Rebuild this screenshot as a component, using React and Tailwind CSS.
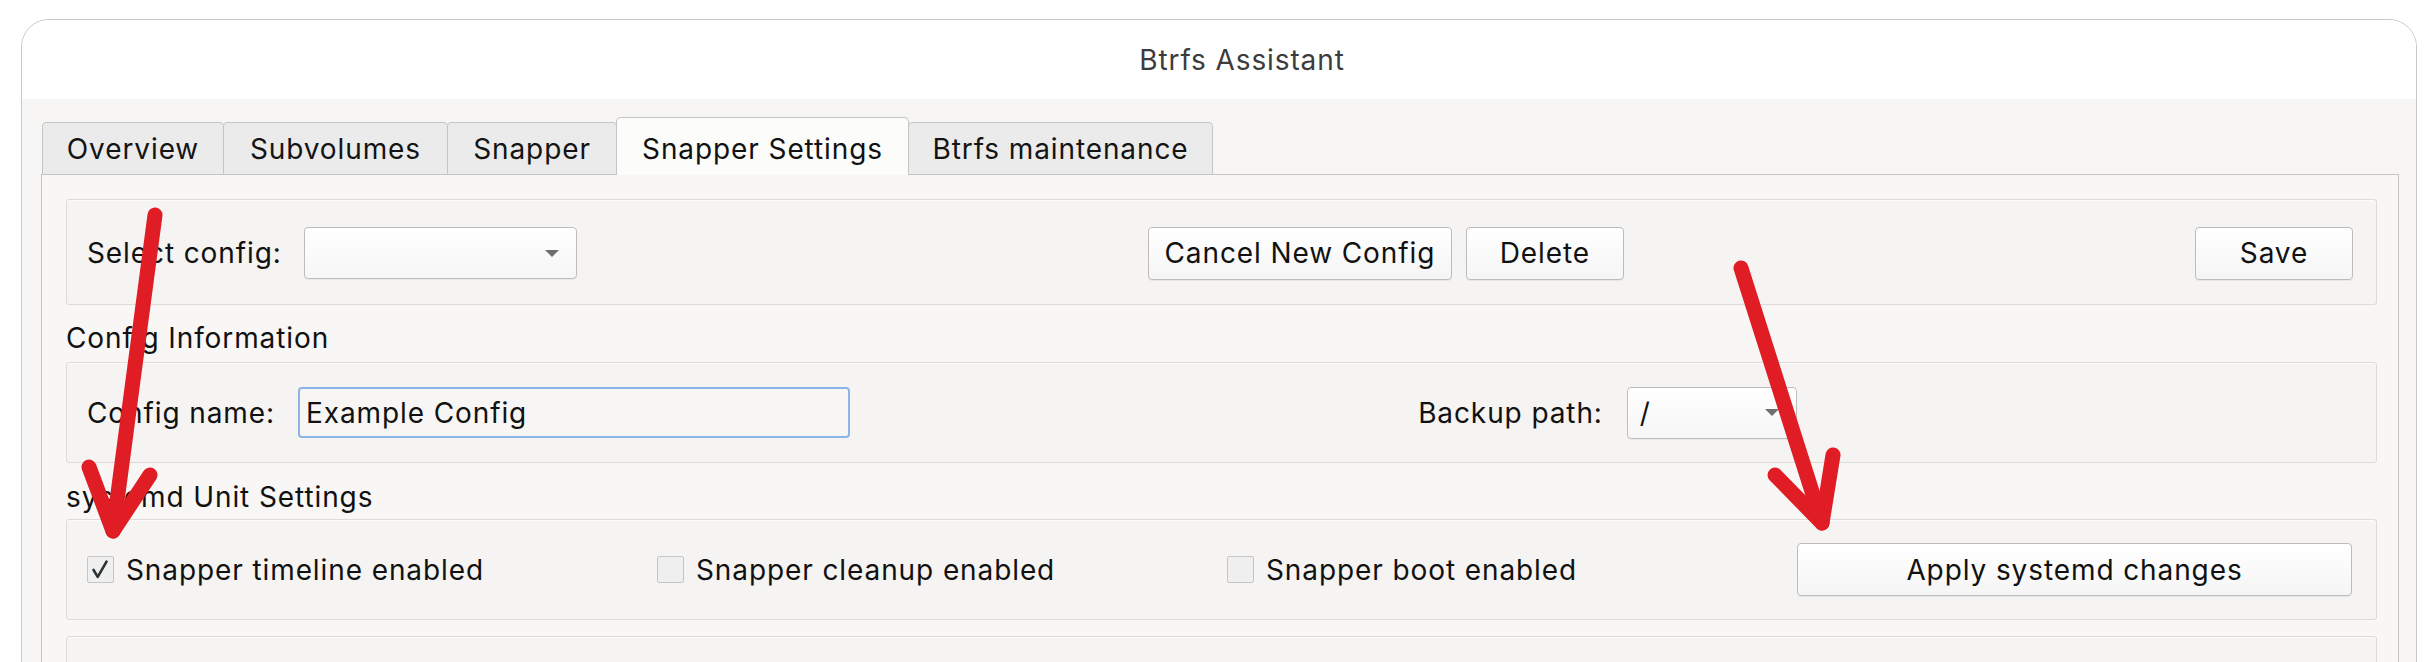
import React from 'react';

const TABS = [
  { label: 'Overview', cls: 'w-[182px]' },
  { label: 'Subvolumes', cls: 'w-[225px]' },
  { label: 'Snapper', cls: 'w-[170px]' },
  { label: 'Snapper Settings', cls: 'w-[293px]', active: true },
  { label: 'Btrfs maintenance', cls: 'w-[305px]' },
];

function Arrow() {
  return (
    <svg width="16" height="9" viewBox="0 0 16 9" className="shrink-0">
      <path d="M1 1 L15 1 L8 8 Z" fill="#6f6f6f" />
    </svg>
  );
}

function Combo({ value, cls }) {
  return (
    <div className={`${cls} h-[52px] shrink-0 flex items-center justify-between pl-[12px] pr-[16px] rounded-[4px] border border-[#bdbdbd] bg-gradient-to-b from-white to-[#f6f6f6] shadow-[0_1px_0_rgba(0,0,0,0.04)]`}>
      <span>{value}</span>
      <Arrow />
    </div>
  );
}

function Button({ children, cls }) {
  return (
    <button className={`${cls} h-[53px] shrink-0 flex items-center justify-center rounded-[4px] border border-[#bcbcbc] bg-gradient-to-b from-white to-[#f5f5f5] text-[#111] shadow-[0_1px_0_rgba(0,0,0,0.05)]`}>
      {children}
    </button>
  );
}

function Check({ checked, label }) {
  return (
    <label className="flex items-center gap-[12px]">
      <span className="w-[27px] h-[27px] shrink-0 flex items-center justify-center border border-[#c6c6c6] bg-[#efefef] rounded-[2px]">
        {checked && (
          <svg width="27" height="27" viewBox="0 0 27 27">
            <polyline points="6,14 10.5,21.5 20,5" fill="none" stroke="#2c3236" strokeWidth="2.8" strokeLinecap="round" strokeLinejoin="round" />
          </svg>
        )}
      </span>
      <span>{label}</span>
    </label>
  );
}

function GroupBox({ children, cls }) {
  return (
    <div className={`${cls} rounded-[3px] border border-[#dddad7] bg-[#f5f4f2] shadow-[inset_0_1px_0_rgba(255,255,255,0.6)]`}>
      {children}
    </div>
  );
}

export default function App() {
  return (
    <div className="relative w-[2434px] h-[662px] overflow-hidden bg-white text-[28px] leading-[34px] tracking-[0.9px] text-[#111] font-['Inter','Noto_Sans',sans-serif]">
      {/* window */}
      <div className="ml-[21px] mt-[19px] w-[2396px] h-[700px] rounded-t-[28px] border border-[#c8c8c8] overflow-hidden bg-[#f7f6f4]">
        {/* title bar */}
        <div className="h-[79px] bg-white flex items-center justify-center pl-[46px] text-[#3c3c3c]">
          Btrfs Assistant
        </div>

        {/* tab bar */}
        <div className="relative z-10 -mb-px flex items-end pt-[18px] pl-[20px]">
          {TABS.map((t, i) =>
            t.active ? (
              <div key={t.label} className={`${t.cls} -ml-px h-[58px] flex items-center justify-center pt-[4px] rounded-t-[5px] border border-b-0 border-[#c5c5c5] bg-[#fcfcfb] text-[#111]`}>
                {t.label}
              </div>
            ) : (
              <div key={t.label} className={`${t.cls} ${i === 0 ? '' : '-ml-px'} h-[53px] flex items-center justify-center rounded-t-[4px] border border-[#c5c5c5] bg-[#ebebeb] text-[#141414]`}>
                {t.label}
              </div>
            )
          )}
        </div>

        {/* tab pane */}
        <div className="ml-[19px] mr-[17px] h-[600px] border border-[#c5c5c5] bg-[#f8f7f5] pt-[24px] pl-[24px] pr-[21px]">
          {/* select config */}
          <GroupBox cls="h-[106px] flex items-center pl-[20px] pr-[23px] pt-[2px]">
            <span>Select config:</span>
            <Combo value="" cls="ml-[22px] w-[273px]" />
            <div className="flex-1" />
            <Button cls="w-[304px]">Cancel New Config</Button>
            <Button cls="ml-[14px] w-[158px]">Delete</Button>
            <div className="flex-1" />
            <Button cls="w-[158px]">Save</Button>
          </GroupBox>

          <div className="h-[57px] pt-[16px]">Config Information</div>

          <GroupBox cls="h-[101px] flex items-center pl-[20px] pr-[23px]">
            <span>Config name:</span>
            <div className="ml-[23px] w-[552px] h-[51px] shrink-0 flex items-center pl-[6px] rounded-[4px] border-2 border-[#8cb4e8] bg-[#f7f6f4]">
              Example Config
            </div>
            <div className="flex-1" />
            <span className="ml-[12px]">Backup path:</span>
            <Combo value="/" cls="ml-[24px] w-[170px]" />
            <div className="flex-1" />
          </GroupBox>

          <div className="h-[56px] pt-[17px]">systemd Unit Settings</div>

          <GroupBox cls="h-[101px] grid grid-cols-4 gap-x-[15px] items-center pl-[20px] pr-[24px]">
            <Check checked label="Snapper timeline enabled" />
            <Check label="Snapper cleanup enabled" />
            <Check label="Snapper boot enabled" />
            <Button cls="w-full">Apply systemd changes</Button>
          </GroupBox>

          <GroupBox cls="mt-[16px] h-[120px]" />
        </div>
      </div>

      {/* red annotation arrows */}
      <svg className="absolute inset-0 pointer-events-none" width="2434" height="662" viewBox="0 0 2434 662">
        <g fill="none" stroke="#e01c25" strokeWidth="15" strokeLinecap="round" strokeLinejoin="round">
          <path d="M155 215 L113 531" />
          <path d="M89 467 L113 531 L150 475" />
          <path d="M1741 268 L1822 523" />
          <path d="M1775 475 L1822 523 L1833 455" />
        </g>
      </svg>
    </div>
  );
}
